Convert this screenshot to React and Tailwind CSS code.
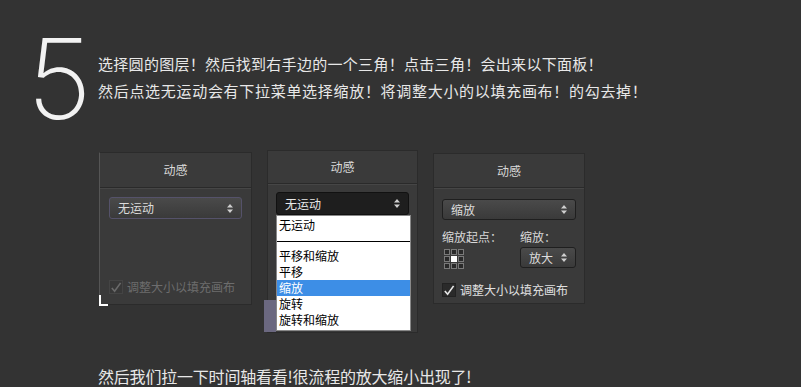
import React from 'react';

const cjk = { fontFamily: '"Noto Sans CJK SC", "Liberation Sans", sans-serif' };

// 上下小三角（下拉框右侧）
const Arrows = () => (
  <svg width="6" height="9" viewBox="0 0 6 9" className="shrink-0">
    <path d="M3 0 L6 3.5 H0 Z M3 9 L0 5.5 H6 Z" fill="#cfcfcf" />
  </svg>
);

const Select = ({ label, dark = false, className = '' }) => (
  <div
    className={`flex items-center justify-between rounded-[3px] border pl-2 pr-2 text-[12px] ${
      dark
        ? 'bg-[#1e1e1e] border-[#111] text-[#e8e8e8]'
        : 'bg-gradient-to-b from-[#4a4a4a] to-[#3a3a3a] border-[#1f1f1f] text-[#dcdcdc]'
    } ${className}`}
  >
    <span>{label}</span>
    <Arrows />
  </div>
);

const Check = ({ disabled }) => (
  <div
    className={`w-[14px] h-[14px] flex items-center justify-center border ${
      disabled ? 'border-[#444] bg-[#383838]' : 'border-[#222] bg-[#2a2a2a]'
    }`}
  >
    <svg width="13" height="13" viewBox="0 0 13 13">
      <path
        d="M2 7 L5 10.5 L11.5 1.5"
        fill="none"
        stroke={disabled ? '#6a6a6a' : '#e6e6e6'}
        strokeWidth="1.8"
      />
    </svg>
  </div>
);

const Header = ({ className = '' }) => (
  <div className={`flex items-center justify-center border-b border-[#2a2a2a] shadow-[0_1px_0_#464646] text-[12px] text-[#d8d8d8] ${className}`}>
    动感
  </div>
);

const Grid = () => (
  <div className="grid grid-cols-3 gap-[1px] w-[20px]">
    {[0, 1, 2, 3, 4, 5, 6, 7, 8].map((i) => (
      <div
        key={i}
        className={`w-[6px] h-[6px] border ${i === 4 ? 'bg-white border-white' : 'bg-[#2a2a2a] border-[#7a7a7a]'}`}
      />
    ))}
  </div>
);

export default function App() {
  return (
    <div className="w-[801px] h-[387px] bg-[#333333] overflow-hidden relative" style={cjk}>
      {/* 标题部分 */}
      <div className="flex items-start pt-[22px] pl-[27px]">
        <div
          className="text-[112px] leading-none text-[#f2f2f2] w-[71px] font-extralight"
          style={{ fontFamily: 'Inter, "Open Sans", sans-serif' }}
        >
          5
        </div>
        <div className="pt-[28px] text-[15px] leading-[27px] text-[#e8e8e8]">
          <p className="tracking-[0.3px]">选择圆的图层！然后找到右手边的一个三角！点击三角！会出来以下面板！</p>
          <p className="tracking-[0.7px]">然后点选无运动会有下拉菜单选择缩放！将调整大小的以填充画布！的勾去掉！</p>
        </div>
      </div>

      {/* 三个面板 */}
      <div className="flex items-start pl-[99px] mt-[16px] gap-[15px]">
        {/* 面板1 */}
        <div className="relative w-[153px] h-[153px] mt-[2px] bg-[#3a3a3a] border border-[#2b2b2b] border-l-[#555] flex flex-col">
          <Header className="h-[35px]" />
          <div className="px-[9px] pt-[9px] flex-1 flex flex-col">
            <Select label="无运动" className="h-[22px] border-[#55526a]" />
            <div className="mt-auto mb-[8px] flex items-center gap-[4px] text-[12px] text-[#6d6d6d]">
              <Check disabled />
              <span>调整大小以填充画布</span>
            </div>
          </div>
          <div className="absolute left-[-1px] bottom-[-2px] w-[9px] h-[11px] border-l-2 border-b-2 border-white" />
        </div>

        {/* 面板2 */}
        <div className="relative w-[151px] h-[183px] bg-[#3a3a3a] border border-[#2b2b2b]">
          <Header className="h-[33px]" />
          <div className="px-[8px] pt-[8px]">
            <Select label="无运动" dark className="h-[23px]" />
          </div>
          <div className="absolute left-[-4px] bottom-0 w-[12px] h-[32px] bg-[#6b6880]" />
          <div className="absolute left-[8px] top-[64px] w-[135px] bg-white border border-[#888] text-[12px] leading-[16px] text-black">
            <div className="px-[2px] pt-[1px] pb-[8px]">无运动</div>
            <div className="border-t border-black mb-[6px]" />
            <div className="px-[2px]">平移和缩放</div>
            <div className="px-[2px]">平移</div>
            <div className="px-[2px] bg-[#3d8ee6] text-white">缩放</div>
            <div className="px-[2px]">旋转</div>
            <div className="px-[2px] pb-[2px]">旋转和缩放</div>
          </div>
        </div>

        {/* 面板3 */}
        <div className="w-[152px] h-[151px] mt-[3px] bg-[#3a3a3a] border border-[#2b2b2b] flex flex-col">
          <Header className="h-[34px]" />
          <div className="px-[8px] pt-[11px] flex flex-col">
            <Select label="缩放" className="h-[21px]" />
            <div className="flex mt-[8px] text-[12px] text-[#d8d8d8]">
              <div className="w-[79px] flex flex-col">
                <span>缩放起点：</span>
                <div className="mt-[3px] ml-[2px]">
                  <Grid />
                </div>
              </div>
              <div className="flex flex-col">
                <span>缩放：</span>
                <Select label="放大" className="h-[21px] w-[56px] mt-[1px] pl-[8px]" />
              </div>
            </div>
            <div className="mt-[12px] flex items-center gap-[4px] text-[12px] text-[#e0e0e0]">
              <Check />
              <span>调整大小以填充画布</span>
            </div>
          </div>
        </div>
      </div>

      {/* 底部文字 */}
      <p className="absolute left-[98px] top-[367px] text-[16px] leading-[19px] tracking-[-0.2px] text-[#e8e8e8]">
        然后我们拉一下时间轴看看!很流程的放大缩小出现了!
      </p>
    </div>
  );
}
